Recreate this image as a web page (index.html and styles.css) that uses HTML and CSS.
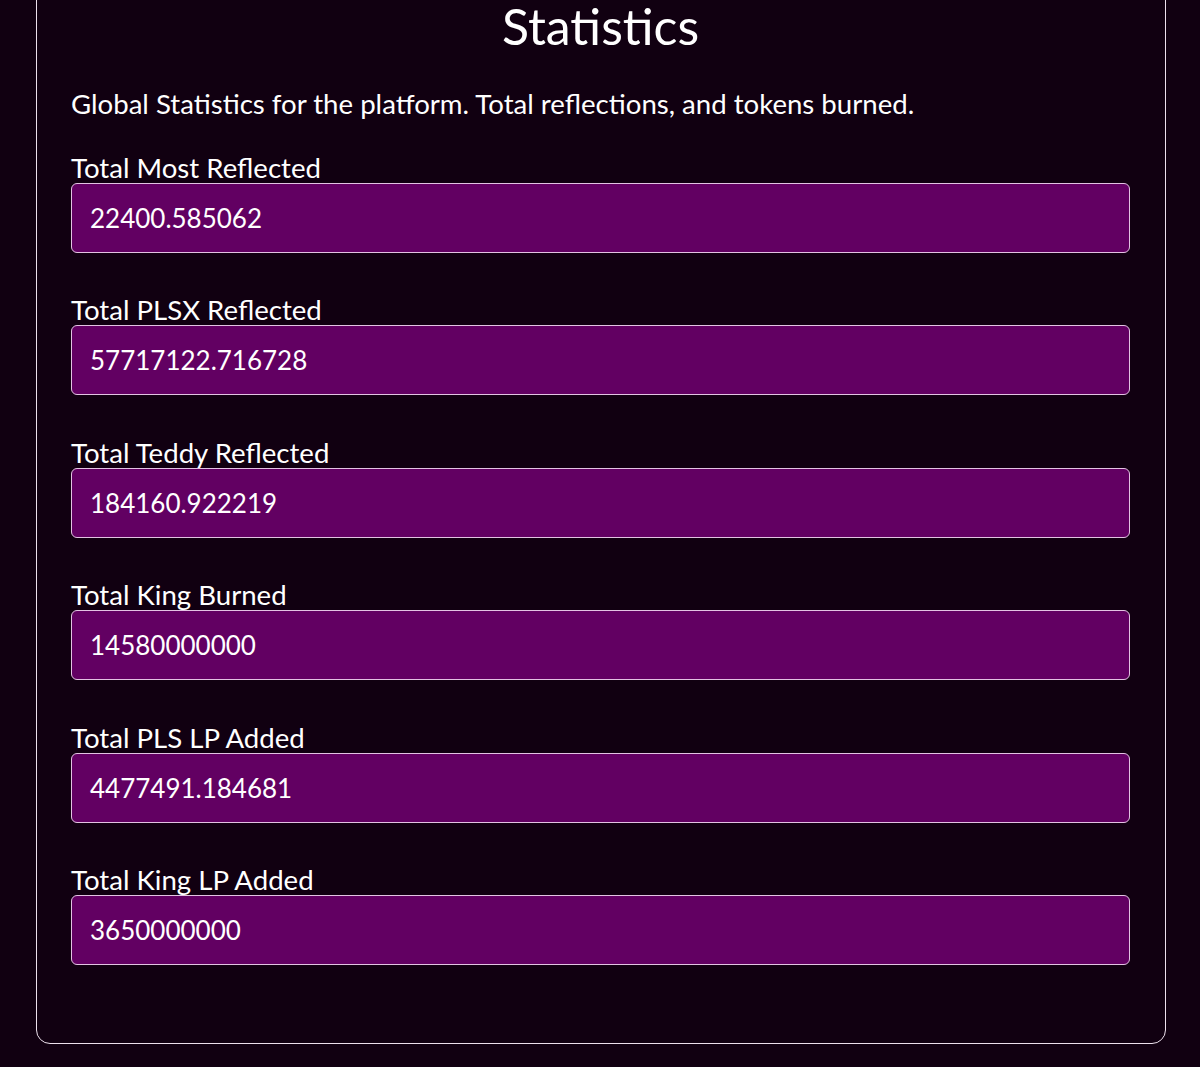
FILE: index.html
```html
<!DOCTYPE html>
<html lang="en">
<head>
<meta charset="utf-8">
<title>Statistics</title>
<link rel="stylesheet" href="styles.css">
</head>
<body>
<section class="card">
  <h1 class="title">Statistics</h1>
  <p class="desc">Global Statistics for the platform. Total reflections, and tokens burned.</p>
  <div class="field first">
    <label class="label">Total Most Reflected</label>
    <div class="box">22400.585062</div>
  </div>
  <div class="field">
    <label class="label">Total PLSX Reflected</label>
    <div class="box">57717122.716728</div>
  </div>
  <div class="field">
    <label class="label">Total Teddy Reflected</label>
    <div class="box">184160.922219</div>
  </div>
  <div class="field">
    <label class="label">Total King Burned</label>
    <div class="box">14580000000</div>
  </div>
  <div class="field">
    <label class="label">Total PLS LP Added</label>
    <div class="box">4477491.184681</div>
  </div>
  <div class="field">
    <label class="label">Total King LP Added</label>
    <div class="box">3650000000</div>
  </div>
</section>
</body>
</html>
```
FILE: styles.css
```css
html, body {
  margin: 0;
  padding: 0;
  background: #110011;
}
body {
  font-family: "Lato", "Noto Sans", sans-serif;
  color: #ffffff;
}
.card {
  margin: -40px 34px 0 36px;
  padding: 41px 35px 78px 34px;
  border: 1.5px solid #ece0ec;
  border-radius: 14px;
}
.title {
  margin: 0;
  font-size: 50px;
  font-weight: 400;
  line-height: 48px;
  text-align: center;
}
.desc {
  margin: 38.5px 0 0 0;
  font-size: 27.6px;
  line-height: 30px;
}
.field {
  margin-top: 42.5px;
  display: flex;
  flex-direction: column;
}
.field.first {
  margin-top: 34px;
}
.label {
  font-size: 27.6px;
  line-height: 30px;
  display: block;
}
.box {
  height: 70px;
  box-sizing: border-box;
  display: flex;
  align-items: center;
  padding: 0 18px;
  background: #620062;
  border: 1px solid #e3c3e3;
  border-radius: 6px;
  font-size: 26px;
}
```
